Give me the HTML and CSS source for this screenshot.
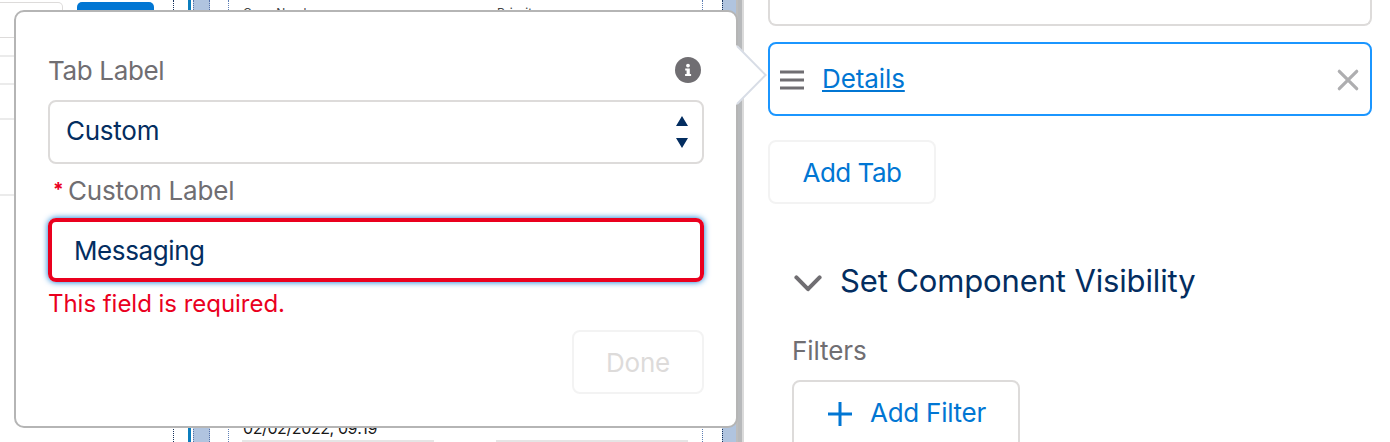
FILE: index.html
```html
<!DOCTYPE html>
<html lang="en">
<head>
<meta charset="utf-8">
<title>Tab settings</title>
<link rel="stylesheet" href="styles.css">
</head>
<body>
<div class="app">
  <main class="canvas">
    <div class="palette">
      <div class="search"></div>
      <div class="save"></div>
      <div class="rows"><i class="r2"></i><i class="r3"></i><i class="r4"></i><i class="r5"></i></div>
    </div>
    <div class="gutter"><div class="bar"></div><div class="band"></div></div>
    <div class="record">
      <div class="field"><span class="name">Case Number</span><span class="value">02/02/2022, 09:19</span></div>
      <div class="field"><span class="name">Priority</span><span class="value"></span></div>
    </div>
    <div class="edge"></div>
  </main>
  <div class="divider"></div>
  <aside class="panel">
    <div class="item previous"></div>
    <div class="item active">
      <svg class="grip" width="24" height="20" viewBox="0 0 24 20"><path d="M0 2h24M0 10h24M0 18h24" stroke="#706e72" stroke-width="3"/></svg>
      <a class="link">Details</a>
      <svg class="close" width="22" height="22" viewBox="0 0 22 22"><path d="M2.3 2.3l17.4 17.4M19.7 2.3L2.3 19.7" stroke="#aeaeb0" stroke-width="3.2" stroke-linecap="round"/></svg>
    </div>
    <button class="btn add-tab"><span>Add Tab</span></button>
    <h2 class="section">
      <svg width="28" height="18" viewBox="0 0 28 18"><path d="M2.4 2.4L14 14.2L25.6 2.4" fill="none" stroke="#706e72" stroke-width="4" stroke-linecap="round" stroke-linejoin="round"/></svg>
      <span>Set Component Visibility</span>
    </h2>
    <div class="filters">Filters</div>
    <button class="btn add-filter">
      <svg width="24" height="24" viewBox="0 0 24 24"><path d="M12 0v24M0 12h24" stroke="#0176d3" stroke-width="3"/></svg>
      <span>Add Filter</span>
    </button>
  </aside>
</div>
<section class="popover">
  <svg class="nub" width="32" height="62" viewBox="0 0 32 62"><path d="M0 0L30 30L0 60" fill="#fff"/><path d="M1 1L29.6 30L1 59" fill="none" stroke="#d8dde6" stroke-width="2"/></svg>
  <div class="label-row first">
    <span>Tab Label</span>
    <svg width="26" height="26" viewBox="0 0 26 26"><circle cx="13" cy="13" r="13" fill="#706e72"/><circle cx="13" cy="8.6" r="1.9" fill="#fff"/><path d="M10.2 11.4h4.6v5.7h1.3v2H10.1v-2h1.5v-3.7h-1.4z" fill="#fff"/></svg>
  </div>
  <div class="select">
    <span>Custom</span>
    <svg width="12" height="32" viewBox="0 0 12 32"><path d="M6 0L12 10H0zM0 22h12L6 32z" fill="#032d60"/></svg>
  </div>
  <div class="label-row required"><b>*</b><span>Custom Label</span></div>
  <div class="input">Messaging</div>
  <div class="error">This field is required.</div>
  <button class="btn done" disabled>Done</button>
</section>
</body>
</html>
```
FILE: styles.css
```css
* { box-sizing: border-box; }
body { margin: 0; overflow: hidden; background: #fff; font: 26px/30px Inter, "Liberation Sans", sans-serif; color: #032d60; }
svg { display: block; flex: none; }
.app { display: grid; grid-template-columns: 736px 8px 1fr; height: 442px; }
.canvas { display: grid; grid-template-columns: 174px 54px 475px 1fr; overflow: hidden; }
.palette { display: grid; grid-template-columns: 63px 77px; column-gap: 14px; grid-template-rows: 38px 1fr; border-right: 1px dotted #16325c; }
.search { border: 1px solid #dddbda; border-left: 0; border-radius: 0 5px 0 0; margin-top: 2px; height: 36px; }
.save { background: #0176d3; border-radius: 5px; margin-top: 2px; height: 30px; }
.rows { grid-column: 1 / 3; display: flex; flex-direction: column; }
.rows i { display: block; height: 2px; background: #ebebeb; }
.r2 { margin-top: 17px; }
.r3 { margin-top: 26px; }
.r4 { margin-top: 33px; }
.r5 { margin-top: 74px; }
.gutter { display: flex; padding-left: 14px; gap: 2px; }
.bar { width: 3px; background: #0b7dbd; }
.band { width: 17px; background: #b0c4df; border: dotted #5471a8; border-width: 0 1px; }
.record { display: grid; grid-template-columns: 192px 192px; column-gap: 62px; padding-left: 13px; border: dotted #5f80b5; border-width: 0 1px; }
.field { display: flex; flex-direction: column; height: 442px; color: #181818; border-bottom: 2px solid #e5e5e5; }
.name { font-size: 12px; line-height: 16px; padding: 5px 0 0 1px; letter-spacing: 0.2px; color: #444; }
.value { margin-top: auto; font-size: 16px; line-height: 20px; letter-spacing: -0.4px; white-space: nowrap; padding: 0 0 2px 1px; }
.edge { margin-left: 19px; background: #b0c4df; border-left: 1px dotted #16325c; }
.divider { background: linear-gradient(90deg, #bdbdbd 0 2px, #b7b9bb 2px 6px, #dadada 6px); }
.panel { padding: 0 18px 0 24px; display: flex; flex-direction: column; align-items: flex-start; }
.item { width: 604px; border: 2px solid #dddbda; border-radius: 8px; flex: none; }
.previous { height: 26px; border-top: 0; border-radius: 0 0 8px 8px; }
.active { margin-top: 16px; height: 74px; border-color: #1b96ff; display: flex; align-items: center; padding: 2px 11px 0 10px; }
.link { margin-left: 18px; color: #0176d3; text-decoration: underline; text-decoration-thickness: 2px; text-underline-offset: 2px; line-height: 30px; margin-top: -2px; letter-spacing: -0.1px; }
.close { margin-left: auto; }
.btn { font: inherit; background: #fff; border: 2px solid #f3f3f3; border-radius: 8px; color: #0176d3; height: 64px; padding: 2px 0 0; display: flex; align-items: center; justify-content: center; flex: none; white-space: nowrap; }
.add-tab { width: 168px; margin-top: 24px; letter-spacing: -0.5px; }
.section { display: flex; align-items: center; margin: 58px 0 0 26px; font-size: 31px; line-height: 38px; font-weight: 400; letter-spacing: -0.14px; white-space: nowrap; gap: 18px; }
.section svg { margin-top: 6px; }
.filters { margin: 36px 0 0 24px; color: #706e72; letter-spacing: -0.1px; }
.add-filter { width: 228px; height: 70px; margin: 14px 0 0 24px; border-color: #dddbda; gap: 18px; padding: 0 0 4px 1px; letter-spacing: -0.25px; }
.add-filter svg { margin: 2px 0 0 1px; }
.popover { position: absolute; left: 14px; top: 10px; width: 724px; height: 418px; background: #fff; border: 2px solid #b5b5b5; border-radius: 10px; padding: 44px 32px 0; display: flex; flex-direction: column; }
.nub { position: absolute; left: 720px; top: 33px; }
.label-row { display: flex; justify-content: space-between; height: 30px; color: #706e72; letter-spacing: -0.2px; }
.first { letter-spacing: -0.35px; padding-right: 3px; }
.label-row svg { margin-top: 1px; }
.select { margin-top: 14px; height: 64px; border: 2px solid #dddbda; border-radius: 8px; padding: 0 14px 0 16px; display: flex; align-items: center; justify-content: space-between; letter-spacing: -0.25px; }
.select span { margin-top: -2px; }
.required { justify-content: flex-start; margin-top: 12px; padding-left: 5px; gap: 4px; }
.required b { color: #ea001e; font-size: 19px; line-height: 28px; width: 11px; font-weight: 700; }
.input { margin-top: 12px; height: 64px; border: 4px solid #ea001e; border-radius: 8px; box-shadow: 0 0 6px #0176d3; padding: 2px 0 0 22px; display: flex; align-items: center; letter-spacing: -0.4px; }
.error { margin-top: 7px; font-size: 24px; color: #ea001e; height: 30px; letter-spacing: -0.03px; }
.done { width: 132px; margin-top: 11px; align-self: flex-end; color: #dddbda; letter-spacing: -0.25px; }
```
